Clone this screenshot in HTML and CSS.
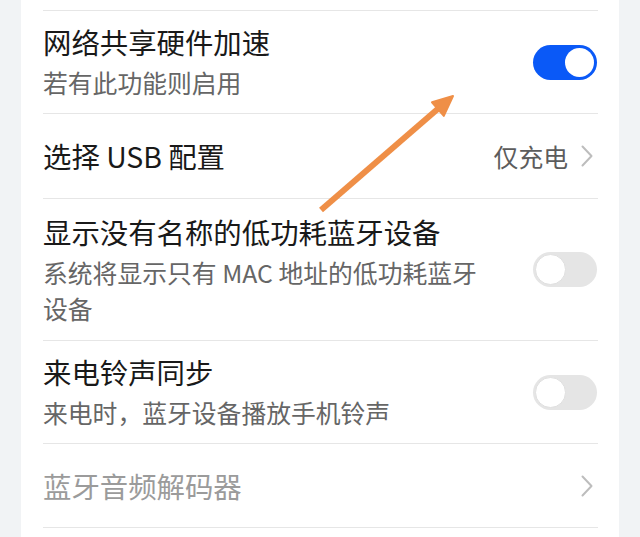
FILE: index.html
```html
<!DOCTYPE html>
<html lang="zh-CN">
<head>
<meta charset="utf-8">
<title>蓝牙设置</title>
<link rel="stylesheet" href="styles.css">
</head>
<body>
<div class="page">
  <div class="card">
    <div class="row">
      <div class="text">
        <div class="title">网络共享硬件加速</div>
        <div class="sub">若有此功能则启用</div>
      </div>
      <div class="toggle on"><span class="knob"></span></div>
    </div>
    <div class="row">
      <div class="text">
        <div class="title">选择 USB 配置</div>
      </div>
      <div class="value">仅充电</div>
      <svg class="chev" viewBox="0 0 12 22" width="12" height="22"><polyline points="1.5,1.5 10.5,11 1.5,20.5" fill="none" stroke="#bdbdbd" stroke-width="2" stroke-linecap="round" stroke-linejoin="round"/></svg>
    </div>
    <div class="row row-tall">
      <div class="text">
        <div class="title">显示没有名称的低功耗蓝牙设备</div>
        <div class="sub">系统将显示只有 MAC 地址的低功耗蓝牙<br>设备</div>
      </div>
      <div class="toggle"><span class="knob"></span></div>
    </div>
    <div class="row">
      <div class="text">
        <div class="title">来电铃声同步</div>
        <div class="sub">来电时，蓝牙设备播放手机铃声</div>
      </div>
      <div class="toggle"><span class="knob"></span></div>
    </div>
    <div class="row">
      <div class="text">
        <div class="title disabled">蓝牙音频解码器</div>
      </div>
      <svg class="chev" viewBox="0 0 12 22" width="12" height="22"><polyline points="1.5,1.5 10.5,11 1.5,20.5" fill="none" stroke="#bdbdbd" stroke-width="2" stroke-linecap="round" stroke-linejoin="round"/></svg>
    </div>
  </div>
  <svg class="arrow" viewBox="0 0 640 537" width="640" height="537">
    <line x1="321" y1="210" x2="440" y2="107" stroke="#ef8f47" stroke-width="6" stroke-linecap="butt"/>
    <polygon points="453,96 443.8,115.9 432,102.3" fill="#ef8f47" stroke="#ef8f47" stroke-width="2" stroke-linejoin="round"/>
  </svg>
</div>
</body>
</html>
```
FILE: styles.css
```css
html, body {
  margin: 0;
  padding: 0;
  background: #f1f3f5;
}

body {
  font-family: "Noto Sans CJK SC", "Noto Sans", sans-serif;
  color: #191919;
}

.page {
  position: relative;
  width: 640px;
  height: 537px;
  overflow: hidden;
  padding: 0 21px;
  box-sizing: border-box;
}

.card {
  background: #ffffff;
  height: 100%;
  padding: 10px 21px 0 22px;
  box-sizing: border-box;
}

.row {
  display: flex;
  align-items: center;
  border-top: 1px solid #e6e6e6;
  padding: 13px 0;
  min-height: 85px;
  box-sizing: border-box;
}

.row:last-child {
  border-bottom: 1px solid #e6e6e6;
}

.row-tall {
  padding: 14.5px 0;
}

.text {
  flex: 1;
  min-width: 0;
  padding-right: 30px;
}

.title {
  font-size: 28.4px;
  line-height: 36px;
  color: #191919;
}

.title.disabled {
  color: #9b9b9b;
}

.sub {
  margin-top: 4px;
  font-size: 24.8px;
  line-height: 36px;
  color: #666666;
}

.value {
  font-size: 24.8px;
  line-height: 36px;
  color: #5c5c5c;
  margin-right: 13px;
}

.chev {
  display: block;
  margin-right: 5px;
}

.toggle {
  position: relative;
  flex: none;
  width: 64px;
  height: 35px;
  border-radius: 18px;
  background: #e5e5e5;
  margin-right: 1px;
}

.toggle .knob {
  position: absolute;
  top: 2px;
  left: 2px;
  width: 31px;
  height: 31px;
  border-radius: 50%;
  background: #ffffff;
  box-sizing: border-box;
  border: 1px solid #e0e0e0;
}

.toggle.on {
  background: #0a59f7;
}

.toggle.on .knob {
  left: auto;
  right: 3px;
  top: 3px;
  width: 29px;
  height: 29px;
  border: none;
}

.arrow {
  position: absolute;
  left: 0;
  top: 0;
  pointer-events: none;
}
```
